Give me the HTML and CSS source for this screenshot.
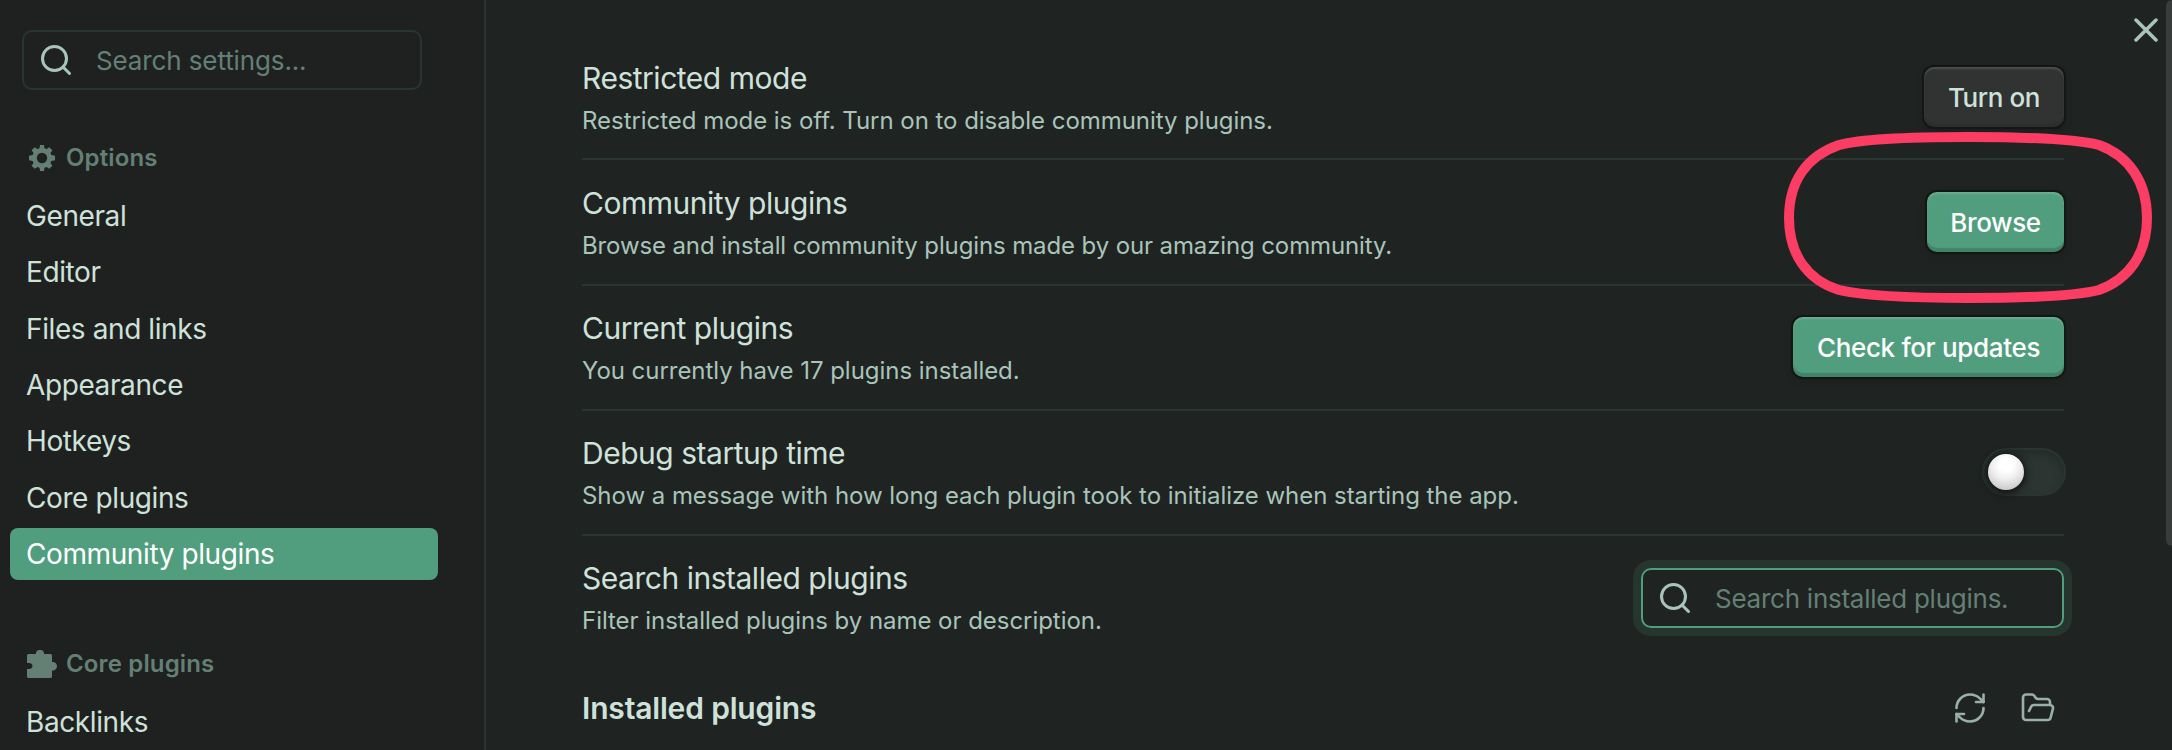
FILE: index.html
```
<!DOCTYPE html>
<html lang="en">
<head>
<meta charset="utf-8">
<title>Settings</title>
<link rel="stylesheet" href="styles.css">
</head>
<body>
<div class="settings">
  <aside class="sidebar">
    <div class="search">
      <svg class="icon" viewBox="0 0 24 24"><circle cx="11" cy="11" r="8"/><path d="m21 21-4.35-4.35"/></svg>
      <span class="placeholder">Search settings...</span>
    </div>
    <h2 class="group-title">
      <svg class="group-icon" viewBox="0 0 24 24"><path fill-rule="evenodd" d="M10.2 0h3.6l.5 2.9 2 .8L18.7 2l2.9 2.9-1.8 2.4.8 2 3.4.6v4.2l-3.4.6-.8 2 1.8 2.4-2.9 2.900-2.400-1.700-2 .8-.5 2.900h-3.600l-.5-2.900-2-.8L5.300 22l-2.900-2.900 1.800-2.400-.8-2L0 14.100V9.900l3.400-.6.8-2-1.800-2.400L5.300 2l2.400 1.700 2-.8zM12 7.200a4.800 4.800 0 1 0 0 9.600a4.800 4.800 0 0 0 0-9.600z"/></svg>
      <span>Options</span>
    </h2>
    <nav class="nav">
      <a class="nav-item">General</a>
      <a class="nav-item">Editor</a>
      <a class="nav-item">Files and links</a>
      <a class="nav-item">Appearance</a>
      <a class="nav-item">Hotkeys</a>
      <a class="nav-item">Core plugins</a>
      <a class="nav-item active">Community plugins</a>
    </nav>
    <h2 class="group-title second">
      <svg class="puzzle-icon" viewBox="0 0 30 28"><path d="M1.500 4H9C8.600 1.500 10.500 0 13 0s4.400 1.500 4 4h6.500q1.500 0 1.500 1.500V12c2.500-.4 5 1.300 5 4s-2.500 5-5 4.500v6q0 1.500-1.500 1.500h-22Q0 28 0 26.500V19h1.500C4 19 5.500 17.800 5.500 16S4 13 1.500 13H0V5.500Q0 4 1.500 4z"/></svg>
      <span>Core plugins</span>
    </h2>
    <nav class="nav">
      <a class="nav-item">Backlinks</a>
    </nav>
  </aside>
  <main class="content">
    <section class="row first">
      <div class="info"><div class="name">Restricted mode</div><div class="desc">Restricted mode is off. Turn on to disable community plugins.</div></div>
      <button class="btn turn">Turn on</button>
    </section>
    <section class="row tall">
      <div class="info"><div class="name">Community plugins</div><div class="desc tight">Browse and install community plugins made by our amazing community.</div></div>
      <button class="btn cta browse">Browse</button>
    </section>
    <section class="row">
      <div class="info"><div class="name">Current plugins</div><div class="desc">You currently have 17 plugins installed.</div></div>
      <button class="btn cta check">Check for updates</button>
    </section>
    <section class="row">
      <div class="info"><div class="name">Debug startup time</div><div class="desc">Show a message with how long each plugin took to initialize when starting the app.</div></div>
      <div class="toggle"><span class="knob"></span></div>
    </section>
    <section class="row last">
      <div class="info"><div class="name">Search installed plugins</div><div class="desc">Filter installed plugins by name or description.</div></div>
      <div class="search focused">
        <svg class="icon" viewBox="0 0 24 24"><circle cx="11" cy="11" r="8"/><path d="m21 21-4.350-4.350"/></svg>
        <span class="placeholder">Search installed plugins.</span>
      </div>
    </section>
    <section class="installed">
      <h3 class="heading">Installed plugins</h3>
      <div class="actions">
        <svg class="icon" viewBox="0 0 24 24"><path d="M3 12a9 9 0 0 1 9-9 9.750 9.750 0 0 1 6.740 2.740L21 8"/><path d="M21 3v5h-5"/><path d="M21 12a9 9 0 0 1-9 9 9.750 9.750 0 0 1-6.740-2.740L3 16"/><path d="M8 16H3v5"/></svg>
        <svg class="icon" viewBox="0 0 24 24"><path d="m6 14 1.450-2.900A2 2 0 0 1 9.240 10H20a2 2 0 0 1 1.940 2.500l-1.550 6a2 2 0 0 1-1.940 1.500H4a2 2 0 0 1-2-2V5c0-1.100.9-2 2-2h3.930a2 2 0 0 1 1.660.9l.82 1.200a2 2 0 0 0 1.660.9H18a2 2 0 0 1 2 2v2"/></svg>
      </div>
    </section>
  </main>
  <svg class="close" viewBox="0 0 24 24"><path d="M2 2l20 20M22 2L2 22"/></svg>
  <div class="scrollbar"></div>
  <svg class="ring" viewBox="0 0 380 184"><path d="M11 92C11 55 29 30 61 19C87 12 139 11 190 11S293 12 321 19C351 30 369 56 369 92S351 153 321 164C293 171 241 172 190 172S87 170 61 164C29 154 11 128 11 92Z"/></svg>
</div>
</body>
</html>
```
FILE: styles.css
```
* { box-sizing: border-box; }
body {
  margin: 0;
  background: #1f2322;
  font-family: Inter, "Liberation Sans", sans-serif;
  color: #cfe2da;
}
.settings {
  position: relative;
  display: flex;
  width: 2172px;
  height: 750px;
  overflow: hidden;
}
.sidebar {
  width: 486px;
  flex: none;
  padding: 30px 46px 0 10px;
  background: #1e2120;
  border-right: 2px solid #2a3431;
}
.search {
  display: flex;
  align-items: center;
  gap: 22px;
  width: 400px;
  height: 60px;
  margin-left: 12px;
  padding-left: 14px;
  border: 2px solid #2a3431;
  border-radius: 10px;
}
.icon {
  width: 36px;
  height: 36px;
  flex: none;
  fill: none;
  stroke: #a9c4b9;
  stroke-width: 1.75;
  stroke-linecap: round;
  stroke-linejoin: round;
}
.search .icon { stroke-width: 2; }
.placeholder {
  padding-top: 2px;
  font-size: 26px;
  line-height: 32px;
  letter-spacing: -0.12px;
  color: #648075;
  white-space: nowrap;
}
.focused .placeholder { letter-spacing: -0.25px; }
.group-title {
  display: flex;
  align-items: center;
  gap: 11px;
  height: 36px;
  margin: 50px 0 14px;
  padding-left: 19px;
  font-size: 24px;
  font-weight: 600;
  line-height: 36px;
  letter-spacing: 0.15px;
  color: #648075;
}
.group-title.second { margin: 66px 0 14px; padding-left: 17px; gap: 9px; }
.group-title.second span { padding-top: 1px; }
.group-icon { width: 26px; height: 26px; fill: #648075; }
.puzzle-icon { width: 30px; height: 28px; fill: #648075; }
.nav { display: grid; gap: 4.33px; }
.nav-item {
  height: 52px;
  padding-left: 16px;
  border-radius: 8px;
  font-size: 28px;
  line-height: 52px;
  letter-spacing: -0.4px;
}
.nav-item.active { background: #509e7e; color: #fff; }
.content {
  flex: none;
  width: 1578px;
  padding: 35px 0 0 96px;
}
.row {
  display: flex;
  justify-content: space-between;
  align-items: center;
  height: 125px;
  padding-bottom: 1px;
  border-bottom: 2px solid #2a3431;
}
.row.first { padding: 1px 0 0; }
.row.tall { height: 126px; padding: 0; }
.row.last { height: 124px; padding: 0; border: 0; }
.info { padding-top: 3px; }
.last .info { padding-top: 2px; }
.name { font-size: 30px; line-height: 39px; letter-spacing: -0.48px; white-space: nowrap; }
.desc { margin-top: 5px; font-size: 24px; line-height: 36px; letter-spacing: -0.04px; color: #a9c4b9; white-space: nowrap; }
.desc.tight { letter-spacing: -0.12px; }
.btn {
  height: 60px;
  padding: 2px 0 0;
  border: 0;
  border-radius: 10px;
  background: #303332;
  color: #cfe2da;
  font: 500 26px/58px Inter, sans-serif;
  letter-spacing: -0.4px;
  box-shadow: 0 0 0 2px #131615, 0 4px 8px rgba(0,0,0,.2), inset 0 2px 2px rgba(255,255,255,.14), inset 0 -3px 3px rgba(0,0,0,.12);
}
.turn { width: 140px; }
.cta { background: #509e7e; color: #fff; box-shadow: 0 0 0 2px #131615, 0 4px 10px rgba(0,0,0,.15), inset 0 2px 2px rgba(255,255,255,.16), inset 0 -4px 1px rgba(0,0,0,.17); }
.browse { width: 137px; }
.check { width: 271px; letter-spacing: -0.33px; }
.toggle {
  width: 84px;
  height: 48px;
  margin-right: -2px;
  padding: 4px;
  border: 2px solid #2a3431;
  border-radius: 24px;
  background: #2c3532;
  box-shadow: inset 0 4px 10px rgba(0,0,0,.2);
}
.knob {
  display: block;
  width: 36px;
  height: 36px;
  border-radius: 50%;
  background: radial-gradient(circle at 50% 30%, #fff 20%, #f0f0f0 45%, #c6c6c6 85%);
  box-shadow: 0 3px 8px rgba(0,0,0,.5), 0 0 6px 2px rgba(20,24,23,.6);
}
.focused {
  width: 423px;
  border-color: #509e7e;
  box-shadow: 0 0 0 8px #27352f;
}
.installed {
  display: flex;
  justify-content: space-between;
  align-items: center;
  height: 96px;
}
.heading { margin: 0; font-size: 30px; line-height: 39px; font-weight: 600; letter-spacing: -0.17px; }
.actions { display: flex; gap: 32px; padding-right: 8px; }
.actions .icon { stroke: #98b0a6; }
.close {
  position: absolute;
  left: 2134px;
  top: 18px;
  width: 24px;
  height: 24px;
  stroke: #a9c4b9;
  stroke-width: 3.500;
  stroke-linecap: round;
}
.scrollbar {
  position: absolute;
  right: 0;
  top: 0;
  width: 6px;
  height: 546px;
  border-radius: 6px 0 0 6px;
  background: #393c3b;
}
.ring {
  position: absolute;
  left: 1778px;
  top: 126px;
  width: 380px;
  height: 184px;
  fill: none;
  stroke: #fb3c63;
  stroke-width: 10;
}
```
